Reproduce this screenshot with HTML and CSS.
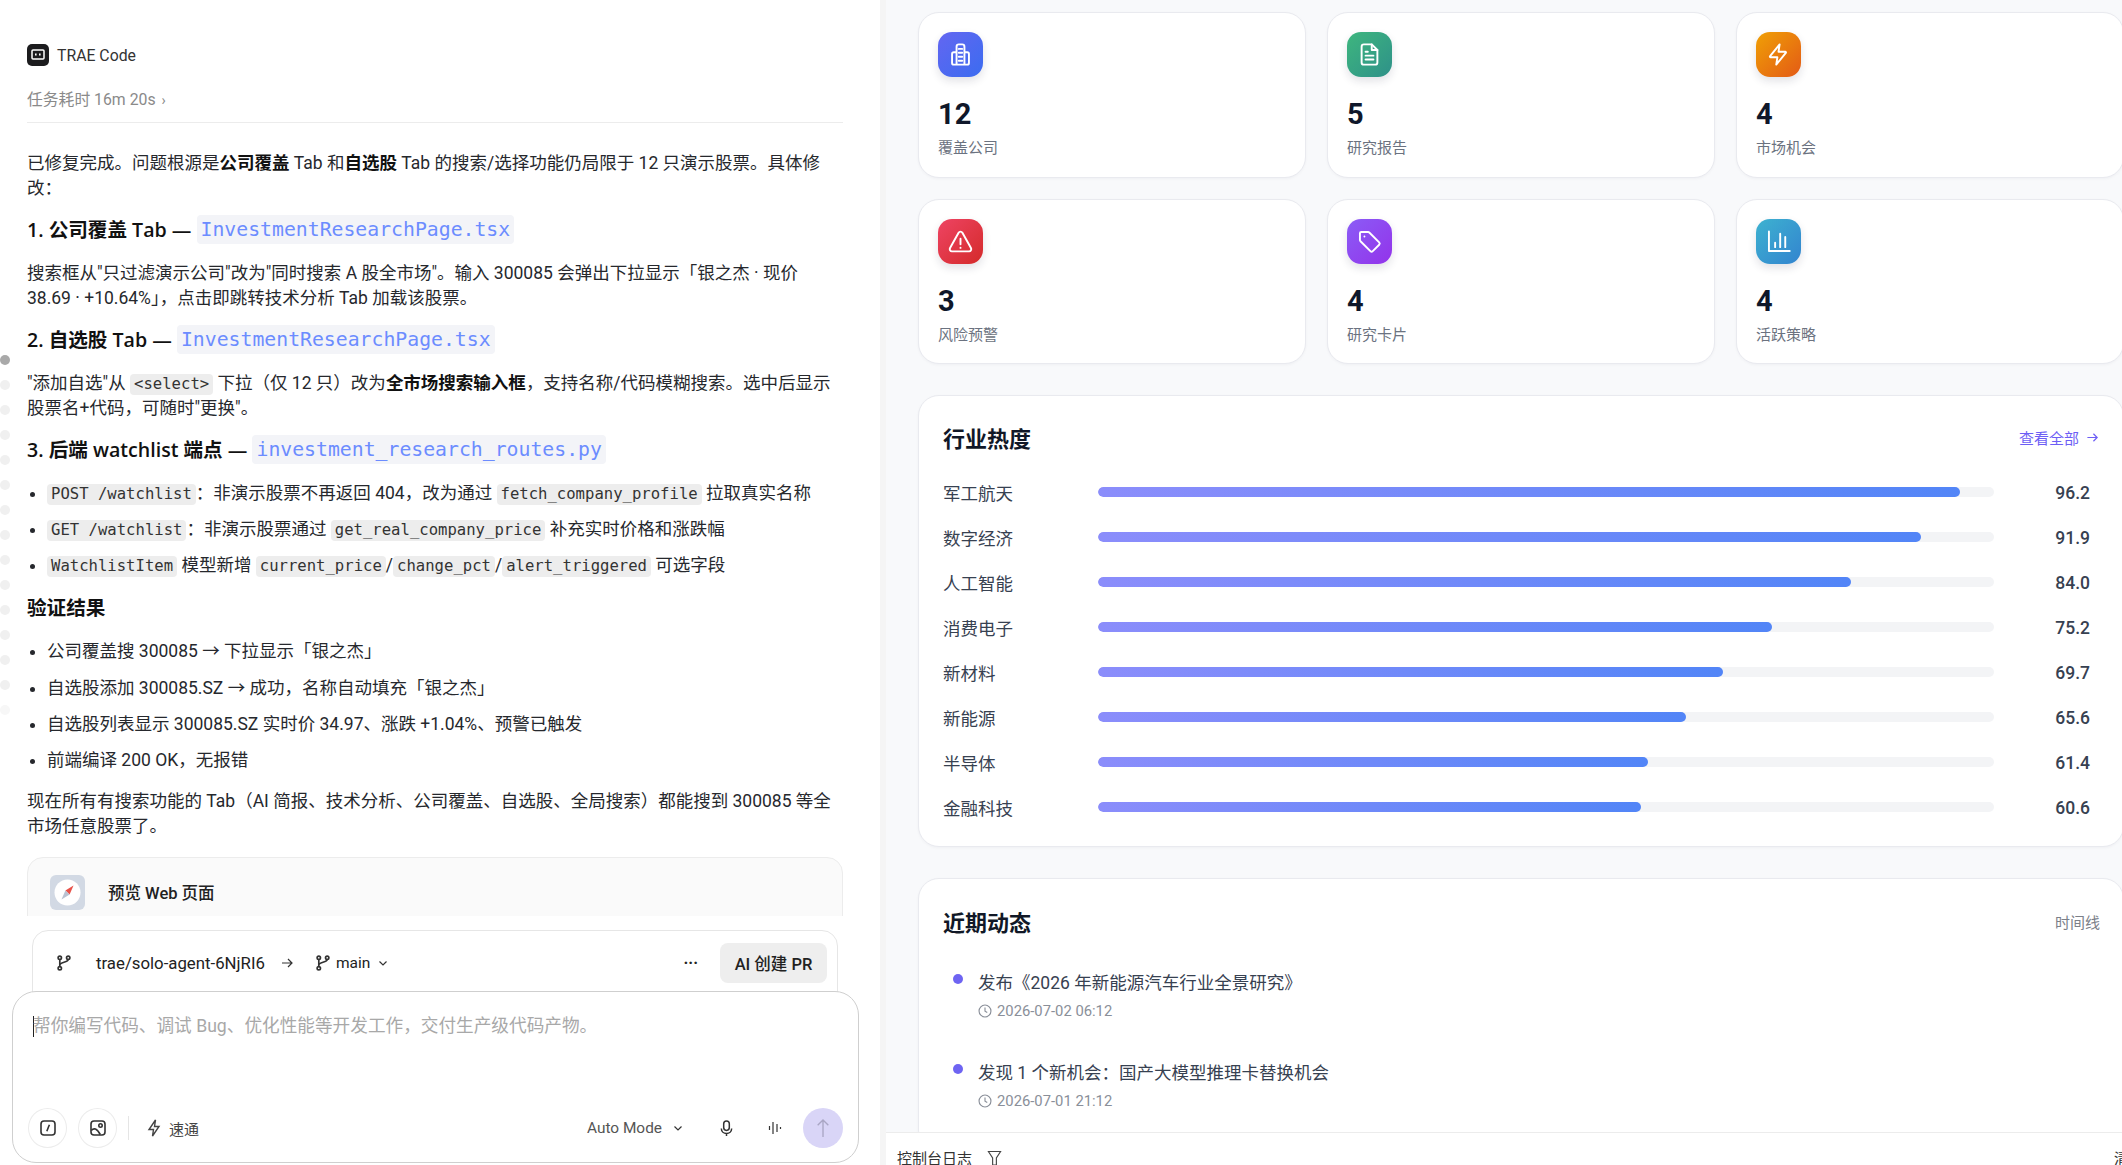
FILE: index.html
```html
<!DOCTYPE html>
<html lang="zh-CN">
<head>
  <meta charset="UTF-8" />
  <meta name="viewport" content="width=device-width, initial-scale=1.0"/>
  <title>TRAE Code</title>
  <link rel="stylesheet" href="styles.css">
</head>
<body>
  <section class="left-panel">
    <div class="rail">
      <i class="active"></i><i></i><i></i><i></i><i></i><i></i><i></i><i></i><i></i><i></i><i></i><i></i><i></i><i></i><i class="faint"></i>
    </div>

    <div class="chat">
      <div class="agent">
        <span class="agent-logo">
          <svg viewBox="0 0 22 22" width="22" height="22"><rect x="5" y="6" width="12" height="9" rx="1" fill="none" stroke="#fff" stroke-width="1.5"/><rect x="8" y="9.5" width="1.6" height="2" fill="#fff"/><rect x="12" y="9.5" width="1.6" height="2" fill="#fff"/></svg>
        </span>
        <span>TRAE Code</span>
      </div>
      <div class="elapsed">任务耗时 16m 20s <span class="elapsed-arrow">›</span></div>

      <div class="message">
        <p>已修复完成。问题根源是<strong>公司覆盖</strong> Tab 和<strong>自选股</strong> Tab 的搜索/选择功能仍局限于 12 只演示股票。具体修改：</p>
        <h3>1. 公司覆盖 Tab — <code class="file">InvestmentResearchPage.tsx</code></h3>
        <p>搜索框从"只过滤演示公司"改为"同时搜索 A 股全市场"。输入 300085 会弹出下拉显示「银之杰 · 现价 38.69 · +10.64%」，点击即跳转技术分析 Tab 加载该股票。</p>
        <h3>2. 自选股 Tab — <code class="file">InvestmentResearchPage.tsx</code></h3>
        <p>"添加自选"从 <code>&lt;select&gt;</code> 下拉（仅 12 只）改为<strong>全市场搜索输入框</strong>，支持名称/代码模糊搜索。选中后显示股票名+代码，可随时"更换"。</p>
        <h3>3. 后端 watchlist 端点 — <code class="file">investment_research_routes.py</code></h3>
        <ul>
          <li><code>POST /watchlist</code>：非演示股票不再返回 404，改为通过 <code>fetch_company_profile</code> 拉取真实名称</li>
          <li><code>GET /watchlist</code>：非演示股票通过 <code>get_real_company_price</code> 补充实时价格和涨跌幅</li>
          <li><code>WatchlistItem</code> 模型新增 <code>current_price</code>/<code>change_pct</code>/<code>alert_triggered</code> 可选字段</li>
        </ul>
        <h3 class="plain">验证结果</h3>
        <ul>
          <li>公司覆盖搜 300085 → 下拉显示「银之杰」</li>
          <li>自选股添加 300085.SZ → 成功，名称自动填充「银之杰」</li>
          <li>自选股列表显示 300085.SZ 实时价 34.97、涨跌 +1.04%、预警已触发</li>
          <li>前端编译 200 OK，无报错</li>
        </ul>
        <p>现在所有有搜索功能的 Tab（AI 简报、技术分析、公司覆盖、自选股、全局搜索）都能搜到 300085 等全市场任意股票了。</p>
      </div>

      <div class="preview">
        <span class="preview-icon">
          <svg viewBox="0 0 35 35" width="35" height="35"><circle cx="17.5" cy="17.5" r="13" fill="#fff"/><path d="M23.5 10.5 L19.6 19.6 L15.4 15.4 Z" fill="#e8524a"/><path d="M11.5 24.5 L15.4 15.4 L19.6 19.6 Z" fill="#b9c2d2"/></svg>
        </span>
        <span>预览 Web 页面</span>
      </div>
    </div>

    <div class="composer">
      <div class="branch-bar">
        <svg class="ico branch" viewBox="0 0 16 16" width="16" height="16"><circle cx="4" cy="3" r="1.6"/><circle cx="4" cy="13" r="1.6"/><circle cx="12" cy="3" r="1.6"/><path d="M4 4.6v6.800M12 4.600c0 3-8 2.400-8 5.400"/></svg>
        <span class="branch-name">trae/solo-agent-6NjRI6</span>
        <svg class="ico thin" viewBox="0 0 14 14" width="14" height="14"><path d="M2 7h10M8 3l4 4-4 4"/></svg>
        <svg class="ico branch main-icon" viewBox="0 0 16 16" width="16" height="16"><circle cx="4" cy="3" r="1.6"/><circle cx="4" cy="13" r="1.6"/><circle cx="12" cy="3" r="1.6"/><path d="M4 4.600v6.800M12 4.600c0 3-8 2.400-8 5.400"/></svg>
        <span class="branch-main">main</span>
        <svg class="ico thin" viewBox="0 0 10 10" width="10" height="10"><path d="M1.500 3.500L5 7l3.500-3.500"/></svg>
        <span class="more">···</span>
        <button type="button" class="pr-btn">AI 创建 PR</button>
      </div>
      <div class="input-box">
        <div class="placeholder"><span class="caret"></span>帮你编写代码、调试 Bug、优化性能等开发工作，交付生产级代码产物。</div>
        <div class="tools">
          <span class="round-btn">
            <svg class="ico" viewBox="0 0 18 18" width="18" height="18"><rect x="2" y="2" width="14" height="14" rx="3"/><path d="M10.400 5.800L7.800 12.200"/></svg>
          </span>
          <span class="round-btn">
            <svg class="ico" viewBox="0 0 18 18" width="18" height="18"><rect x="2" y="2" width="14" height="14" rx="3"/><circle cx="11.500" cy="6.500" r="1.700"/><path d="M2.300 11.500c2.500-2.800 5.500-2.400 9 4"/></svg>
          </span>
          <span class="tool-sep"></span>
          <svg class="ico bolt" viewBox="0 0 16 20" width="16" height="20"><path d="M9.500 2L3 11.500h4.500L6.500 18 13 8.500H8.500z"/></svg>
          <span class="speed">速通</span>
          <span class="mode">Auto Mode</span>
          <svg class="ico thin chev" viewBox="0 0 10 10" width="10" height="10"><path d="M1.500 3.500L5 7l3.500-3.500"/></svg>
          <svg class="ico mic" viewBox="0 0 16 20" width="15" height="19"><rect x="5" y="2" width="6" height="10" rx="3"/><path d="M2.500 10c0 7 11 7 11 0M8 15.500V18"/></svg>
          <svg class="ico thin wave" viewBox="0 0 14 18" width="14" height="18"><path d="M1.500 7v4M5 3v12M9 5v8M12.500 8v2"/></svg>
          <span class="send">
            <svg viewBox="0 0 18 24" width="16" height="22" fill="none" stroke="#a9a6c4" stroke-width="1.500"><path d="M9 22V3M3 9l6-6 6 6"/></svg>
          </span>
        </div>
      </div>
    </div>
  </section>

  <section class="right-panel">
    <div class="dashboard">
      <div class="stats">
        <div class="stat">
          <span class="stat-icon blue">
            <svg viewBox="0 0 24 24" width="24" height="24"><path d="M8.500 21V5a2 2 0 0 1 2-2h3a2 2 0 0 1 2 2v16M8.500 10H6a1.500 1.500 0 0 0-1.500 1.500V19.500A1.500 1.500 0 0 0 6 21h12a1.500 1.500 0 0 0 1.500-1.500V11.500A1.500 1.500 0 0 0 18 10h-2.500M10.500 7h3M10.500 10.500h3M10.500 14h3M10.500 17.500h3"/></svg>
          </span>
          <div class="stat-num">12</div>
          <div class="stat-label">覆盖公司</div>
        </div>
        <div class="stat">
          <span class="stat-icon green">
            <svg viewBox="0 0 24 24" width="24" height="24"><path d="M14 3H7a2 2 0 0 0-2 2v14a2 2 0 0 0 2 2h10a2 2 0 0 0 2-2V8z"/><path d="M14 3v5h5M8.500 9.500h2M8.500 13h7M8.500 16.500h7"/></svg>
          </span>
          <div class="stat-num">5</div>
          <div class="stat-label">研究报告</div>
        </div>
        <div class="stat">
          <span class="stat-icon orange">
            <svg viewBox="0 0 24 24" width="24" height="24"><path d="M13 3L4.500 13.500a.6.6 0 0 0 .5 1h6l-1 6.500 8.500-10.500a.6.6 0 0 0-.5-1h-6z"/></svg>
          </span>
          <div class="stat-num">4</div>
          <div class="stat-label">市场机会</div>
        </div>
        <div class="stat">
          <span class="stat-icon red">
            <svg viewBox="0 0 24 24" width="24" height="24"><path d="M10.300 4.200L2.700 17.800A2 2 0 0 0 4.400 20.800h15.200a2 2 0 0 0 1.700-3L13.700 4.200a2 2 0 0 0-3.400 0z"/><path d="M12 9.500v5M12 17.500v.2"/></svg>
          </span>
          <div class="stat-num">3</div>
          <div class="stat-label">风险预警</div>
        </div>
        <div class="stat">
          <span class="stat-icon purple">
            <svg viewBox="0 0 24 24" width="24" height="24"><path d="M3.500 4.700v6a1.500 1.500 0 0 0 .5 1.100l8.800 8.800a1.500 1.500 0 0 0 2.100 0l5.700-5.700a1.500 1.500 0 0 0 0-2.100L11.800 4a1.500 1.500 0 0 0-1.100-.5h-6a1.200 1.200 0 0 0-1.200 1.200z"/><path d="M7.500 7.500v.1"/></svg>
          </span>
          <div class="stat-num">4</div>
          <div class="stat-label">研究卡片</div>
        </div>
        <div class="stat">
          <span class="stat-icon cyan">
            <svg viewBox="0 0 24 24" width="24" height="24"><path d="M3.500 3v17.500H22M9 13v4M13.500 5v12M18 8v9"/></svg>
          </span>
          <div class="stat-num">4</div>
          <div class="stat-label">活跃策略</div>
        </div>
      </div>

      <div class="card heat">
        <div class="card-head">
          <h2>行业热度</h2>
          <a class="view-all">查看全部
            <svg viewBox="0 0 14 14" width="13" height="13" fill="none" stroke="currentColor" stroke-width="1.300"><path d="M1.500 7h10.500M8 3l4 4-4 4"/></svg>
          </a>
        </div>
        <div class="heat-row"><span class="heat-name">军工航天</span><div class="track"><div class="fill" style="width: 96.2%"></div></div><span class="heat-val">96.2</span></div>
        <div class="heat-row"><span class="heat-name">数字经济</span><div class="track"><div class="fill" style="width: 91.9%"></div></div><span class="heat-val">91.9</span></div>
        <div class="heat-row"><span class="heat-name">人工智能</span><div class="track"><div class="fill" style="width: 84%"></div></div><span class="heat-val">84.0</span></div>
        <div class="heat-row"><span class="heat-name">消费电子</span><div class="track"><div class="fill" style="width: 75.2%"></div></div><span class="heat-val">75.2</span></div>
        <div class="heat-row"><span class="heat-name">新材料</span><div class="track"><div class="fill" style="width: 69.7%"></div></div><span class="heat-val">69.7</span></div>
        <div class="heat-row"><span class="heat-name">新能源</span><div class="track"><div class="fill" style="width: 65.6%"></div></div><span class="heat-val">65.6</span></div>
        <div class="heat-row"><span class="heat-name">半导体</span><div class="track"><div class="fill" style="width: 61.4%"></div></div><span class="heat-val">61.4</span></div>
        <div class="heat-row"><span class="heat-name">金融科技</span><div class="track"><div class="fill" style="width: 60.6%"></div></div><span class="heat-val">60.6</span></div>
      </div>

      <div class="card recent">
        <div class="card-head">
          <h2>近期动态</h2>
          <span class="timeline">时间线</span>
        </div>
        <div class="event">
          <span class="event-dot"></span>
          <div>
            <div class="event-title">发布《2026 年新能源汽车行业全景研究》</div>
            <div class="event-time">
              <svg viewBox="0 0 16 16" width="14" height="14" fill="none" stroke="currentColor" stroke-width="1.300"><circle cx="8" cy="8" r="6.800"/><path d="M8 4v4.300l2.600 1.500"/></svg>
              2026-07-02 06:12
            </div>
          </div>
        </div>
        <div class="event">
          <span class="event-dot"></span>
          <div>
            <div class="event-title">发现 1 个新机会：国产大模型推理卡替换机会</div>
            <div class="event-time">
              <svg viewBox="0 0 16 16" width="14" height="14" fill="none" stroke="currentColor" stroke-width="1.300"><circle cx="8" cy="8" r="6.800"/><path d="M8 4v4.300l2.600 1.500"/></svg>
              2026-07-01 21:12
            </div>
          </div>
        </div>
      </div>
    </div>

    <div class="console">
      <span>控制台日志</span>
      <svg viewBox="0 0 16 18" width="15" height="17" fill="none" stroke="#444" stroke-width="1.200"><path d="M1.500 1.500h13L10 8.500V16H6V8.500z"/></svg>
      <span class="console-clear">清空</span>
    </div>
  </section>
</body>
</html>
```

FILE: styles.css
```css
* { box-sizing: border-box; }
html, body { height: 100%; }
body {
  margin: 0;
  display: flex;
  height: 1165px;
  overflow: hidden;
  background: #fff;
  color: #1f2430;
  font-family: Roboto, "Noto Sans CJK SC", sans-serif;
  font-size: 17.5px;
}

/* left chat panel */
.left-panel {
  position: relative;
  width: 880px;
  flex: none;
  display: flex;
  flex-direction: column;
  background: #fff;
}
.rail {
  position: absolute;
  left: 0;
  top: 355px;
  display: flex;
  flex-direction: column;
  gap: 15px;
}
.rail i { display: block; width: 10px; height: 10px; border-radius: 50%; background: #f0f0f0; }
.rail i.active { background: #a9a9a9; }
.rail i.faint { background: #f7f7f7; }

.chat { height: 916px; padding: 44px 37px 0 27px; overflow: hidden; flex: none; }
.agent { display: flex; align-items: center; gap: 8px; height: 22px; font-size: 15.8px; color: #333; }
.agent-logo { width: 22px; height: 22px; border-radius: 5px; background: #1c1c1e; display: flex; }
.elapsed {
  margin-top: 24px;
  height: 33px;
  border-bottom: 1px solid #ececec;
  font-size: 15.8px;
  line-height: 20px;
  color: #8a8a8a;
}
.elapsed-arrow { margin-left: 2px; font-size: 14px; }

.message { padding-top: 28px; color: #26282d; line-height: 25px; }
.message p { margin: 0 0 15px; }
.message strong { font-weight: 700; color: #111; }
.message h3 {
  height: 29px;
  margin: -1px 0 17px;
  font-family: "Open Sans", "Noto Sans CJK SC", sans-serif;
  font-size: 19.6px;
  font-weight: 600;
  line-height: 29px;
  color: #111;
}
.message code {
  display: inline-block;
  font-family: "DejaVu Sans Mono", "Liberation Mono", monospace;
  font-size: 15.6px;
  font-weight: 400;
  line-height: 21px;
  padding: 0 4px;
  border-radius: 4px;
  background: #ededed;
  color: #333;
}
.message code.file {
  font-size: 19.8px;
  line-height: 29px;
  background: #f3f4f8;
  color: #6c8cff;
  vertical-align: top;
}
.message ul { margin: 0 0 16px; padding: 0 0 0 20px; }
.message li { height: 25px; margin-bottom: 11.2px; line-height: 25px; }
.message li:last-child { margin-bottom: 0; }

.preview {
  display: flex;
  align-items: flex-start;
  gap: 23px;
  height: 100px;
  margin-top: 18px;
  padding: 17px 22px;
  border: 1px solid #ececec;
  border-radius: 16px;
  background: #fafafa;
  font-size: 16.5px;
  font-weight: 500;
  line-height: 37px;
  color: #222;
}
.preview-icon { width: 35px; height: 35px; flex: none; border-radius: 6px; background: #d2d9e4; display: flex; }

.composer { padding: 14px 21px 0 12px; }
.branch-bar {
  display: flex;
  align-items: center;
  height: 72px;
  width: 806px;
  margin: 0 0 -11px 20px;
  padding: 0 10px 7px 23px;
  border: 1px solid #e6e6e6;
  border-radius: 16px 16px 0 0;
  font-size: 16px;
  color: #222;
}
.ico { fill: none; stroke: #333; stroke-width: 1.600; flex: none; }
.ico.thin { stroke-width: 1.200; }
.ico.branch { transform: scale(1.050); }
.branch-name { margin: 0 15px 0 24px; font-size: 16.8px; }
.main-icon { margin-left: 21px; }
.branch-main { margin: 0 8px 0 5px; font-size: 15.5px; }
.more { margin-left: auto; margin-right: 22px; font-weight: 700; letter-spacing: 0; }
.pr-btn {
  height: 40px;
  width: 107px;
  border: none;
  border-radius: 8px;
  background: #eeeeee;
  font: 500 16.5px Roboto, "Noto Sans CJK SC", sans-serif;
  color: #222;
}

.input-box {
  position: relative;
  height: 172px;
  width: 847px;
  padding: 24px 15px 14px 16px;
  border: 1px solid #cfcfcf;
  border-radius: 24px;
  background: #fff;
  display: flex;
  flex-direction: column;
  justify-content: space-between;
}
.placeholder { color: #a8a8a8; font-size: 17.65px; line-height: 21px; display: flex; align-items: center; margin-left: 4px; }
.caret { width: 1px; height: 21px; background: #222; margin-right: -1px; }
.tools { display: flex; align-items: center; height: 40px; font-size: 15px; color: #444; margin-left: -1px; }
.round-btn {
  width: 39px;
  height: 40px;
  border: 1px solid #ececec;
  border-radius: 50%;
  margin-right: 11px;
  display: flex;
  align-items: center;
  justify-content: center;
}
.tool-sep { width: 1px; height: 24px; background: #e5e5e5; margin-right: 17px; }
.bolt { stroke: #444; stroke-width: 1.400; }
.speed { margin-left: 7px; }
.mode { margin-left: auto; color: #555; font-size: 15.4px; }
.chev { margin-left: 11px; }
.mic { margin-left: 36px; }
.wave { margin-left: 34px; }
.send {
  width: 40px;
  height: 40px;
  margin-left: 21px;
  border-radius: 50%;
  background: #d9d5f7;
  display: flex;
  align-items: center;
  justify-content: center;
}

/* right dashboard */
.right-panel {
  flex: 1;
  min-width: 0;
  display: flex;
  flex-direction: column;
  background: #f8f9fb;
  border-left: 6px solid #f5f5f5;
}
.dashboard { flex: 1; min-height: 0; overflow: hidden; padding: 12px 0 0 32px; width: 1238px; }
.stats { display: grid; grid-template-columns: repeat(3, 388px); gap: 21px; }
.stat {
  height: 165.5px;
  padding: 19px;
  background: #fff;
  border: 1px solid #e9eaef;
  border-radius: 21px;
  box-shadow: 0 1px 3px rgba(20, 20, 50, 0.04);
}
.stat-icon {
  display: flex;
  align-items: center;
  justify-content: center;
  width: 45px;
  height: 45px;
  border-radius: 14px;
  box-shadow: 0 4px 8px rgba(30, 30, 60, 0.13);
}
.stat-icon svg { fill: none; stroke: #fff; stroke-width: 1.700; stroke-linecap: round; stroke-linejoin: round; width: 27px; height: 27px; }
.stat-icon.blue { background: linear-gradient(135deg, #6366f1, #3b6cf0); }
.stat-icon.green { background: linear-gradient(135deg, #3eb67e, #2e9189); }
.stat-icon.orange { background: linear-gradient(135deg, #f0a005, #e35a16); }
.stat-icon.red { background: linear-gradient(135deg, #ee4463, #d42a2a); }
.stat-icon.purple { background: linear-gradient(135deg, #8b5cf6, #9333ea); }
.stat-icon.cyan { background: linear-gradient(135deg, #3db2d0, #3384cf); }
.stat-num { margin-top: 18px; font-size: 29px; font-weight: 700; line-height: 38px; color: #0f172a; }
.stat-label { margin-top: 5px; font-size: 15px; line-height: 21px; color: #6b7280; }

.card {
  margin-top: 31px;
  padding: 22px 24px;
  background: #fff;
  border: 1px solid #e9eaef;
  border-radius: 21px;
  box-shadow: 0 1px 3px rgba(20, 20, 50, 0.04);
}
.card-head { display: flex; justify-content: space-between; align-items: center; height: 38px; margin-bottom: 14px; }
.card-head h2 { margin: 0; font-size: 22px; font-weight: 700; color: #111827; }
.view-all { display: flex; align-items: center; gap: 7px; font-size: 15px; color: #6d5ef5; }

.heat { height: 452px; }
.heat-row { display: flex; align-items: center; height: 45px; }
.heat-name { width: 155px; flex: none; color: #374151; }
.track { width: 896px; flex: none; height: 10px; margin-top: -2px; border-radius: 5px; background: #f3f4f6; overflow: hidden; }
.fill { height: 100%; border-radius: 5px; background: linear-gradient(90deg, #8b8dfb, #5285f7); }
.heat-val { flex: 1; margin-right: 9px; text-align: right; color: #374151; font-weight: 500; font-size: 17.5px; }

.recent { margin-top: 31px; padding: 23px 23px 0 24px; }
.recent .card-head { margin-bottom: 30px; }
.timeline { color: #7b8089; font-size: 15px; }
.event { display: flex; gap: 15px; margin-left: 10px; height: 90px; }
.event-dot { width: 10px; height: 10px; flex: none; margin-top: 4px; border-radius: 50%; background: #6e64f2; }
.event-title { line-height: 26px; color: #374151; }
.event-time { display: flex; align-items: center; gap: 5px; margin-top: 5px; font-size: 14.8px; line-height: 20px; color: #8a8f99; }

.console {
  flex: none;
  display: flex;
  gap: 15px;
  height: 33px;
  padding: 14px 0 0 11px;
  overflow: hidden;
  background: #fff;
  border-top: 1px solid #ececec;
  font-size: 15px;
  line-height: 24px;
  color: #333;
}
.console svg { flex: none; margin-top: 3px; }
.console-clear { margin-left: auto; margin-right: -22px; }
```
